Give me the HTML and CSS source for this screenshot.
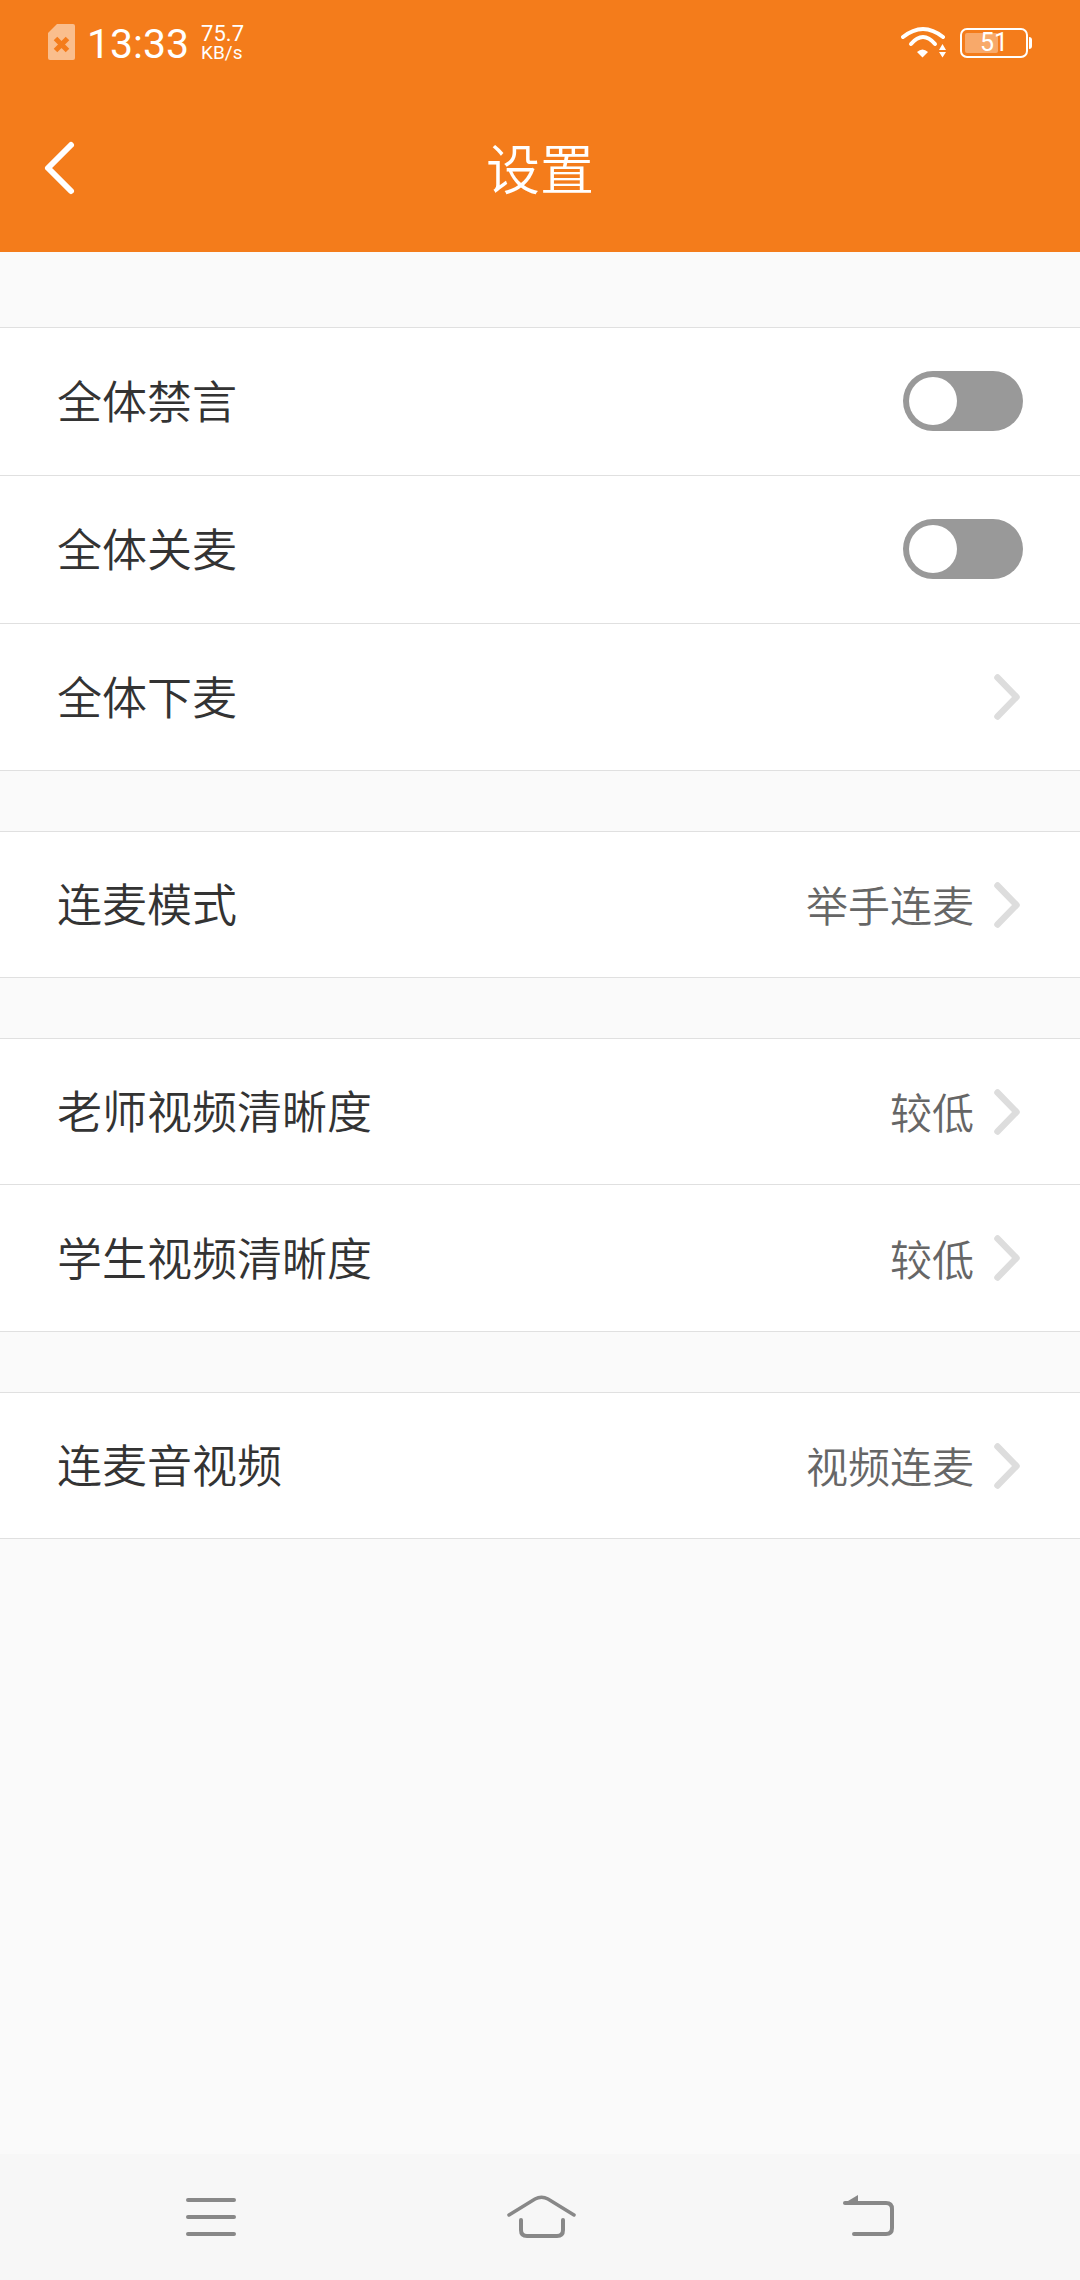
FILE: index.html
```html
<!DOCTYPE html>
<html lang="zh-CN">
<head>
  <meta charset="UTF-8">
  <meta name="viewport" content="width=device-width, initial-scale=1.0">
  <title>设置</title>
  <link rel="stylesheet" href="styles.css">
</head>
<body>
  <div class="page">
    <header class="top">
      <div class="status-bar">
        <div class="status-left">
          <svg class="sim-icon" width="27" height="36" viewBox="0 0 27 36">
            <path d="M9 0H25a2 2 0 0 1 2 2V34a2 2 0 0 1-2 2H2a2 2 0 0 1-2-2V9Z" fill="#fff" fill-opacity=".5"/>
            <path d="M7.500 14.500L19.500 26.500M19.500 14.500L7.500 26.500" stroke="#f47c1b" stroke-width="5" fill="none"/>
          </svg>
          <span class="clock">13:33</span>
          <span class="speed"><span class="speed-num">75.7</span><span class="speed-unit">KB/s</span></span>
        </div>
        <div class="status-right">
          <svg class="wifi-icon" width="45" height="34" viewBox="0 0 45 34">
            <path d="M2 11Q22 -5 42 11" stroke="#fff" stroke-width="4" stroke-linecap="round" fill="none"/>
            <path d="M10 18Q22 4 34 18" stroke="#fff" stroke-width="4" stroke-linecap="round" fill="none"/>
            <path d="M16 26Q21.500 21 27 26L21.500 31.500Z" fill="#fff"/>
            <path d="M41.500 18L45 24H38ZM38 26H45L41.500 31.500Z" fill="#fff"/>
          </svg>
          <div class="battery">
            <div class="battery-fill"></div>
            <span class="battery-num">51</span>
          </div>
        </div>
      </div>
      <div class="toolbar">
        <svg class="back-icon" width="36" height="60" viewBox="0 0 36 60">
          <path d="M30 7L7 30L30 53" stroke="#fff" stroke-width="6" stroke-linecap="round" stroke-linejoin="round" fill="none"/>
        </svg>
        <h1 class="title">设置</h1>
      </div>
    </header>

    <main class="content">
      <section class="group">
        <div class="row row-tall"><span class="row-label">全体禁言</span><div class="switch"><div class="knob"></div></div></div>
        <div class="row row-tall"><span class="row-label">全体关麦</span><div class="switch"><div class="knob"></div></div></div>
        <div class="row row-mid">
          <span class="row-label">全体下麦</span>
          <svg class="chevron" width="26" height="46" viewBox="0 0 26 46"><path d="M3.500 3.500L22.500 23L3.500 42.500" stroke="#ddd" stroke-width="6.500" stroke-linecap="round" stroke-linejoin="round" fill="none"/></svg>
        </div>
      </section>
      <section class="group">
        <div class="row">
          <span class="row-label">连麦模式</span>
          <span class="row-value">举手连麦</span>
          <svg class="chevron" width="26" height="46" viewBox="0 0 26 46"><path d="M3.500 3.500L22.500 23L3.500 42.500" stroke="#ddd" stroke-width="6.500" stroke-linecap="round" stroke-linejoin="round" fill="none"/></svg>
        </div>
      </section>
      <section class="group">
        <div class="row">
          <span class="row-label">老师视频清晰度</span>
          <span class="row-value">较低</span>
          <svg class="chevron" width="26" height="46" viewBox="0 0 26 46"><path d="M3.500 3.500L22.500 23L3.500 42.500" stroke="#ddd" stroke-width="6.500" stroke-linecap="round" stroke-linejoin="round" fill="none"/></svg>
        </div>
        <div class="row row-mid">
          <span class="row-label">学生视频清晰度</span>
          <span class="row-value">较低</span>
          <svg class="chevron" width="26" height="46" viewBox="0 0 26 46"><path d="M3.500 3.500L22.500 23L3.500 42.500" stroke="#ddd" stroke-width="6.500" stroke-linecap="round" stroke-linejoin="round" fill="none"/></svg>
        </div>
      </section>
      <section class="group">
        <div class="row">
          <span class="row-label">连麦音视频</span>
          <span class="row-value">视频连麦</span>
          <svg class="chevron" width="26" height="46" viewBox="0 0 26 46"><path d="M3.500 3.500L22.500 23L3.500 42.500" stroke="#ddd" stroke-width="6.500" stroke-linecap="round" stroke-linejoin="round" fill="none"/></svg>
        </div>
      </section>
    </main>

    <nav class="nav-bar">
      <svg width="50" height="40" viewBox="0 0 50 40">
        <path d="M2 3H48M2 20H48M2 37H48" stroke="#888" stroke-width="4" stroke-linecap="round" fill="none"/>
      </svg>
      <svg class="nav-home" width="69" height="44" viewBox="0 0 69 44">
        <path d="M2 20L28 4Q34.500 0.500 41 4L67 20" stroke="#888" stroke-width="3.500" stroke-linecap="round" fill="none"/>
        <path d="M14 25V35Q14 41 20 41H50Q56 41 56 35V25" stroke="#888" stroke-width="4" stroke-linecap="round" fill="none"/>
      </svg>
      <svg width="51" height="44" viewBox="0 0 51 44">
        <path d="M2 8H43Q49 8 49 14V33Q49 39 43 39H11" stroke="#888" stroke-width="4" stroke-linecap="round" fill="none"/>
        <path d="M0 9L15 0V9Z" fill="#888"/>
      </svg>
    </nav>
  </div>
</body>
</html>
```

FILE: styles.css
```css
* {
  box-sizing: border-box;
}

html, body {
  margin: 0;
  padding: 0;
}

body {
  font-family: "Noto Sans CJK SC", Roboto, sans-serif;
  background-color: #fafafa;
  color: #333;
}

.page {
  width: 1080px;
  height: 2280px;
  display: flex;
  flex-direction: column;
}

.top {
  height: 252px;
  background-color: #f47c1b;
  color: #fff;
}

.status-bar {
  height: 84px;
  padding: 24px 52px 0 48px;
  display: flex;
  justify-content: space-between;
  align-items: flex-start;
}

.status-left, .status-right {
  display: flex;
  align-items: flex-start;
}

.clock {
  margin-left: 12px;
  font-family: Roboto, sans-serif;
  font-size: 41px;
  line-height: 40px;
}

.speed {
  margin-left: 12px;
  display: flex;
  flex-direction: column;
  font-family: Roboto, sans-serif;
}

.speed-num {
  font-size: 22px;
  line-height: 20px;
}

.speed-unit {
  font-size: 19px;
  line-height: 17px;
}

.wifi-icon {
  margin-top: 2px;
}

.battery {
  position: relative;
  width: 68px;
  height: 30px;
  margin: 4px 0 0 14px;
  border: 2px solid #fff;
  border-radius: 7px;
  padding: 3px;
}

.battery::after {
  content: "";
  position: absolute;
  right: -6px;
  top: 7px;
  width: 3px;
  height: 12px;
  background-color: #fff;
  border-radius: 0 3px 3px 0;
}

.battery-fill {
  width: 33px;
  height: 100%;
  background-color: rgba(255, 255, 255, 0.35);
  border-radius: 2px;
}

.battery-num {
  position: absolute;
  left: 0;
  right: 0;
  top: 0;
  line-height: 26px;
  text-align: center;
  font-family: Roboto, sans-serif;
  font-size: 25px;
}

.toolbar {
  height: 168px;
  position: relative;
  display: flex;
  align-items: center;
  justify-content: center;
}

.back-icon {
  position: absolute;
  left: 41px;
  top: 54px;
}

.title {
  margin: 0;
  font-size: 54px;
  font-weight: 350;
  line-height: 1;
  position: relative;
  top: -1px;
}

.content {
  flex: 1;
  padding-top: 75px;
}

.group {
  margin-bottom: 60px;
  background-color: #fff;
  border-top: 1px solid #e0e0e0;
}

.row {
  height: 146px;
  padding: 0 60px 0 57px;
  display: flex;
  align-items: center;
  border-bottom: 1px solid #e0e0e0;
  font-size: 45px;
}

.row-tall {
  height: 148px;
}

.row-mid {
  height: 147px;
}

.row-label {
  flex: 1;
  margin-bottom: 4px;
  font-weight: 350;
  color: #333;
}

.row-value {
  margin-right: 20px;
  margin-bottom: 2px;
  font-size: 42px;
  font-weight: 350;
  color: #666;
}

.switch {
  width: 120px;
  height: 60px;
  margin: 0 -3px 1px 0;
  padding: 6px;
  border-radius: 30px;
  background-color: #999;
}

.knob {
  width: 48px;
  height: 48px;
  border-radius: 50%;
  background-color: #fff;
}

.nav-bar {
  height: 126px;
  padding: 0 186px;
  display: flex;
  justify-content: space-between;
  align-items: center;
  background-color: #f7f7f7;
}

.nav-home {
  margin-left: 3px;
}
```
